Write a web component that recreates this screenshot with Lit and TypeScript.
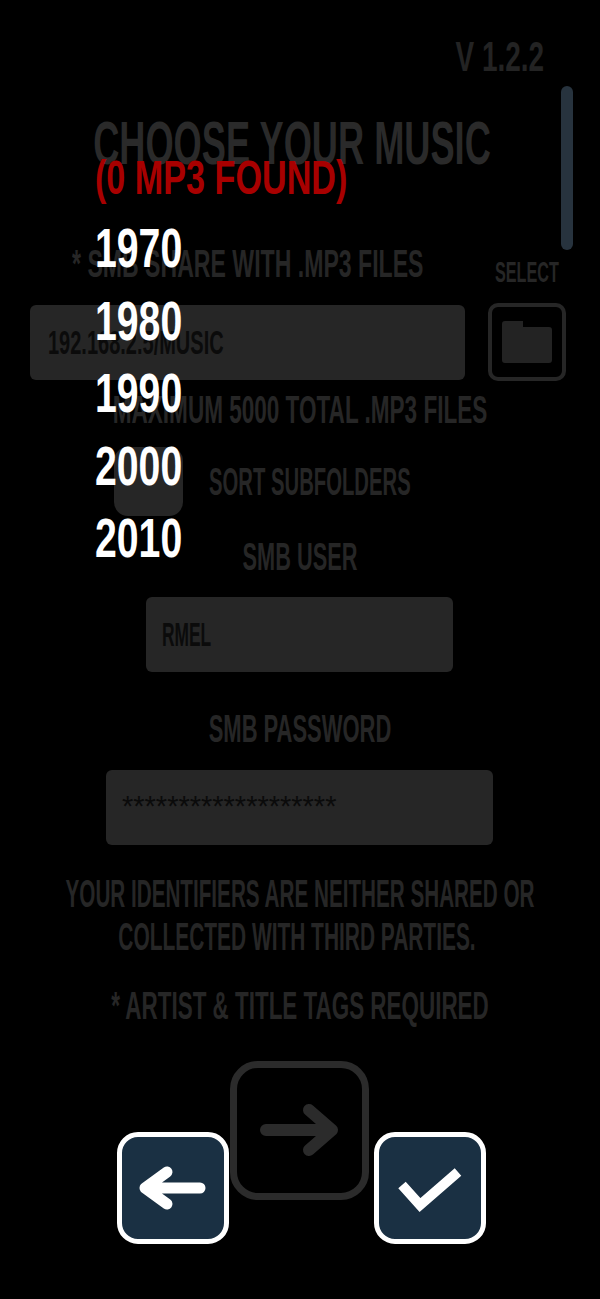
import { LitElement, html, css } from "lit";
import { customElement } from "lit/decorators.js";

@customElement("app-root")
export class AppRoot extends LitElement {
  static styles = css`
    :host { display: block; width: 600px; height: 1299px; background: #000; position: relative; overflow: hidden; font-family: "Liberation Sans Narrow", "Liberation Sans", sans-serif; font-weight: 700; color: #262626; }
    .page { display: flex; flex-direction: column; padding-top: 42px; }
    .line { display: block; white-space: nowrap; text-align: center; transform: scaleX(var(--sx, .57)); transform-origin: center; width: 1000px; margin-left: -200px; }
    .version { font-size: 42px; line-height: 30px; width: 600px; margin-left: 0; text-align: right; padding-right: 84px; box-sizing: border-box; transform-origin: right center; --sx: .665; color: #232323; }
    .title { font-size: 62px; line-height: 45px; margin-top: 48px; margin-left: -208.5px; --sx: .584; color: #2a2a2a; }
    .label { font-size: 39px; line-height: 28px; }
    .share { display: grid; grid-template-columns: 435px 78px; column-gap: 23px; padding-left: 30px; margin-top: 85px; }
    .share-head { height: 53px; }
    .share-label { font-size: 39px; line-height: 28px; white-space: nowrap; margin-left: 42px; transform: scaleX(.592); transform-origin: left center; }
    .select { font-size: 29px; line-height: 21px; white-space: nowrap; margin: 12px 0 0 7px; transform: scaleX(.558); transform-origin: left center; }
    .input { background: #262626; border-radius: 6px; height: 75px; display: flex; align-items: center; padding-left: 16px; box-sizing: border-box; color: #0b0b0b; font-size: 33px; white-space: nowrap; }
    .input span { display: block; transform: scaleX(.526); transform-origin: left center; }
    .share .input { margin-top: 2px; padding-left: 18px; }
    .share .input span { transform: scaleX(.606); }
    .user { width: 307px; margin: 26px 0 0 146px; }
    .pass { width: 387px; margin: 27px 0 0 106px; }
    .stars { font-family: "Liberation Sans", sans-serif; font-weight: 400; font-size: 29px; padding-bottom: 3px; }
    .stars span { transform: none; }
    .folder { width: 78px; height: 78px; box-sizing: border-box; border: 4px solid #262626; border-radius: 10px; display: flex; align-items: center; justify-content: center; }
    .max { margin-top: 15px; --sx: .578; }
    .sort { display: flex; align-items: center; margin-top: 23px; padding-left: 114px; gap: 26px; }
    .check { width: 69px; height: 69px; border-radius: 14px; background: #262626; flex: none; }
    .sort-label { font-size: 39px; line-height: 28px; white-space: nowrap; transform: scaleX(.52); transform-origin: left center; }
    .smb-user { margin-top: 27px; --sx: .558; }
    .smb-pass { margin-top: 43px; --sx: .563; }
    .note { margin-top: 35px; --sx: .536; }
    .note .first { --sx: .53; }
    .note .second { margin-top: 15px; margin-left: -203.5px; }
    .artist { margin-top: 41px; --sx: .575; }
    .buttons { display: flex; align-items: flex-end; margin-top: 41px; padding-left: 117px; }
    .btn { width: 112px; height: 112px; box-sizing: border-box; border: 5px solid #fff; border-radius: 21px; background: #1a3043; flex: none; display: block; }
    .next { width: 139px; height: 139px; box-sizing: border-box; border: 7px solid #2b2b2b; border-radius: 28px; margin: 0 5px 44px 1px; flex: none; display: block; }
    svg { display: block; }
    .scroll { position: absolute; left: 561px; top: 86px; width: 12px; height: 164px; border-radius: 6px; background: #27333e; }
    .menu { position: absolute; left: 95px; top: 160px; display: flex; flex-direction: column; }
    .found { color: #a80000; font-size: 49px; line-height: 35px; white-space: nowrap; transform: scaleX(.697); transform-origin: left center; }
    .years { display: flex; flex-direction: column; gap: 32.5px; margin-top: 33px; color: #fff; font-size: 56px; line-height: 40px; }
    .years div { transform: scaleX(.7); transform-origin: left center; }
  `;

  render() {
    return html`
      <div class="page">
        <div class="line version">V 1.2.2</div>
        <div class="line title">CHOOSE YOUR MUSIC</div>
        <div class="share">
          <div class="share-head"><div class="share-label">* SMB SHARE WITH .MP3 FILES</div></div>
          <div class="share-head"><div class="select">SELECT</div></div>
          <div class="input"><span>192.168.2.5/MUSIC</span></div>
          <div class="folder">
            <svg width="50" height="42" viewBox="0 0 50 42"><path fill="#232323" d="M3 0h18v6h26a3 3 0 0 1 3 3v30a3 3 0 0 1-3 3H3a3 3 0 0 1-3-3V3a3 3 0 0 1 3-3z"/></svg>
          </div>
        </div>
        <div class="line label max">MAXIMUM 5000 TOTAL .MP3 FILES</div>
        <div class="sort"><div class="check"></div><div class="sort-label">SORT SUBFOLDERS</div></div>
        <div class="line label smb-user">SMB USER</div>
        <div class="input user"><span>RMEL</span></div>
        <div class="line label smb-pass">SMB PASSWORD</div>
        <div class="input pass stars"><span>*******************</span></div>
        <div class="note">
          <div class="line label first">YOUR IDENTIFIERS ARE NEITHER SHARED OR</div>
          <div class="line label second">COLLECTED WITH THIRD PARTIES.</div>
        </div>
        <div class="line label artist">* ARTIST &amp; TITLE TAGS REQUIRED</div>
        <div class="buttons">
          <svg class="btn" viewBox="0 0 102 102"><path d="M78 51H23M45 35 23 51l22 16" fill="none" stroke="#fff" stroke-width="11" stroke-linecap="round" stroke-linejoin="round"/></svg>
          <svg class="next" viewBox="0 0 125 125"><path d="M29 62h66M72 42l23 20-23 20" fill="none" stroke="#2b2b2b" stroke-width="12" stroke-linecap="round" stroke-linejoin="round"/></svg>
          <svg class="btn" viewBox="0 0 102 102"><path d="M23 48l18 20 38-33" fill="none" stroke="#fff" stroke-width="10"/></svg>
        </div>
      </div>
      <div class="scroll"></div>
      <div class="menu">
        <div class="found">(0 MP3 FOUND)</div>
        <div class="years"><div>1970</div><div>1980</div><div>1990</div><div>2000</div><div>2010</div></div>
      </div>
    `;
  }
}
